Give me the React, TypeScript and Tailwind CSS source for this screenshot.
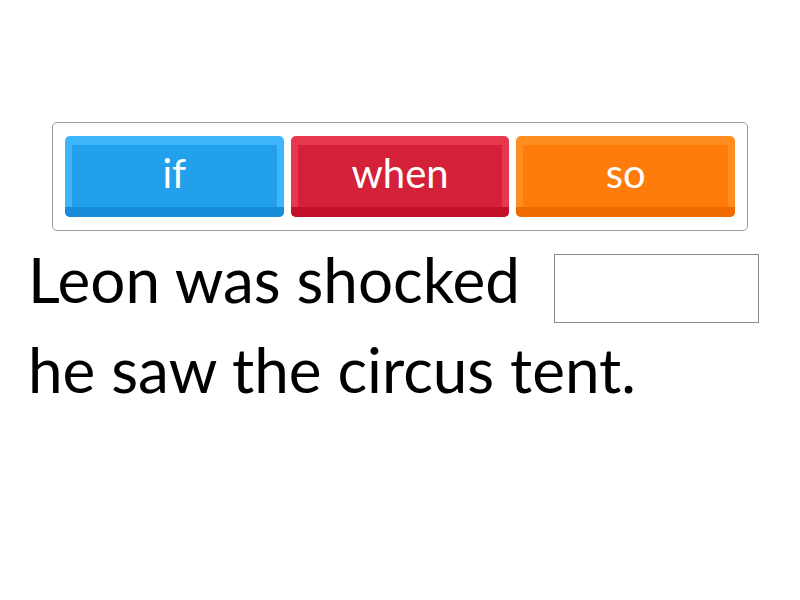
import React from "react";

const Btn = ({ label, outer, inner, bottom }: { label: string; outer: string; inner: string; bottom: string }) => (
  <div className={`flex-1 h-[81px] rounded-[5px] ${outer} pt-[9px] px-[7px] pb-[10px] relative overflow-hidden`}>
    <div className={`absolute left-0 right-0 bottom-0 h-[10px] ${bottom}`} />
    <div className={`relative h-full ${inner} flex items-center justify-center text-white text-[40px] leading-none pb-[6px]`}>
      {label}
    </div>
  </div>
);

export default function App() {
  return (
    <div className="w-[800px] h-[600px] bg-white" style={{ fontFamily: "Lato, 'Open Sans', sans-serif" }}>
      <div className="pt-[122px] px-[52px]">
        <div className="border border-[#9a9a9a] rounded-[5px] px-[12px] py-[13px] flex gap-[7px]">
          <Btn label="if" outer="bg-[#3db6fb]" inner="bg-[#22a0ec]" bottom="bg-[#178cd8]" />
          <Btn label="when" outer="bg-[#e83850]" inner="bg-[#d42038]" bottom="bg-[#c3112a]" />
          <Btn label="so" outer="bg-[#ff8d1f]" inner="bg-[#ff7b0b]" bottom="bg-[#ef6b00]" />
        </div>
      </div>
      <div className="pl-[28px] text-[62px] leading-[90px] text-black mt-[3px]">
        <div className="flex items-start">
          <span>Leon was shocked</span>
          <span className="inline-block ml-[34px] mt-[20px] w-[205px] h-[69px] border border-[#8a8a8a]" />
        </div>
        <div>he saw the circus tent.</div>
      </div>
    </div>
  );
}
